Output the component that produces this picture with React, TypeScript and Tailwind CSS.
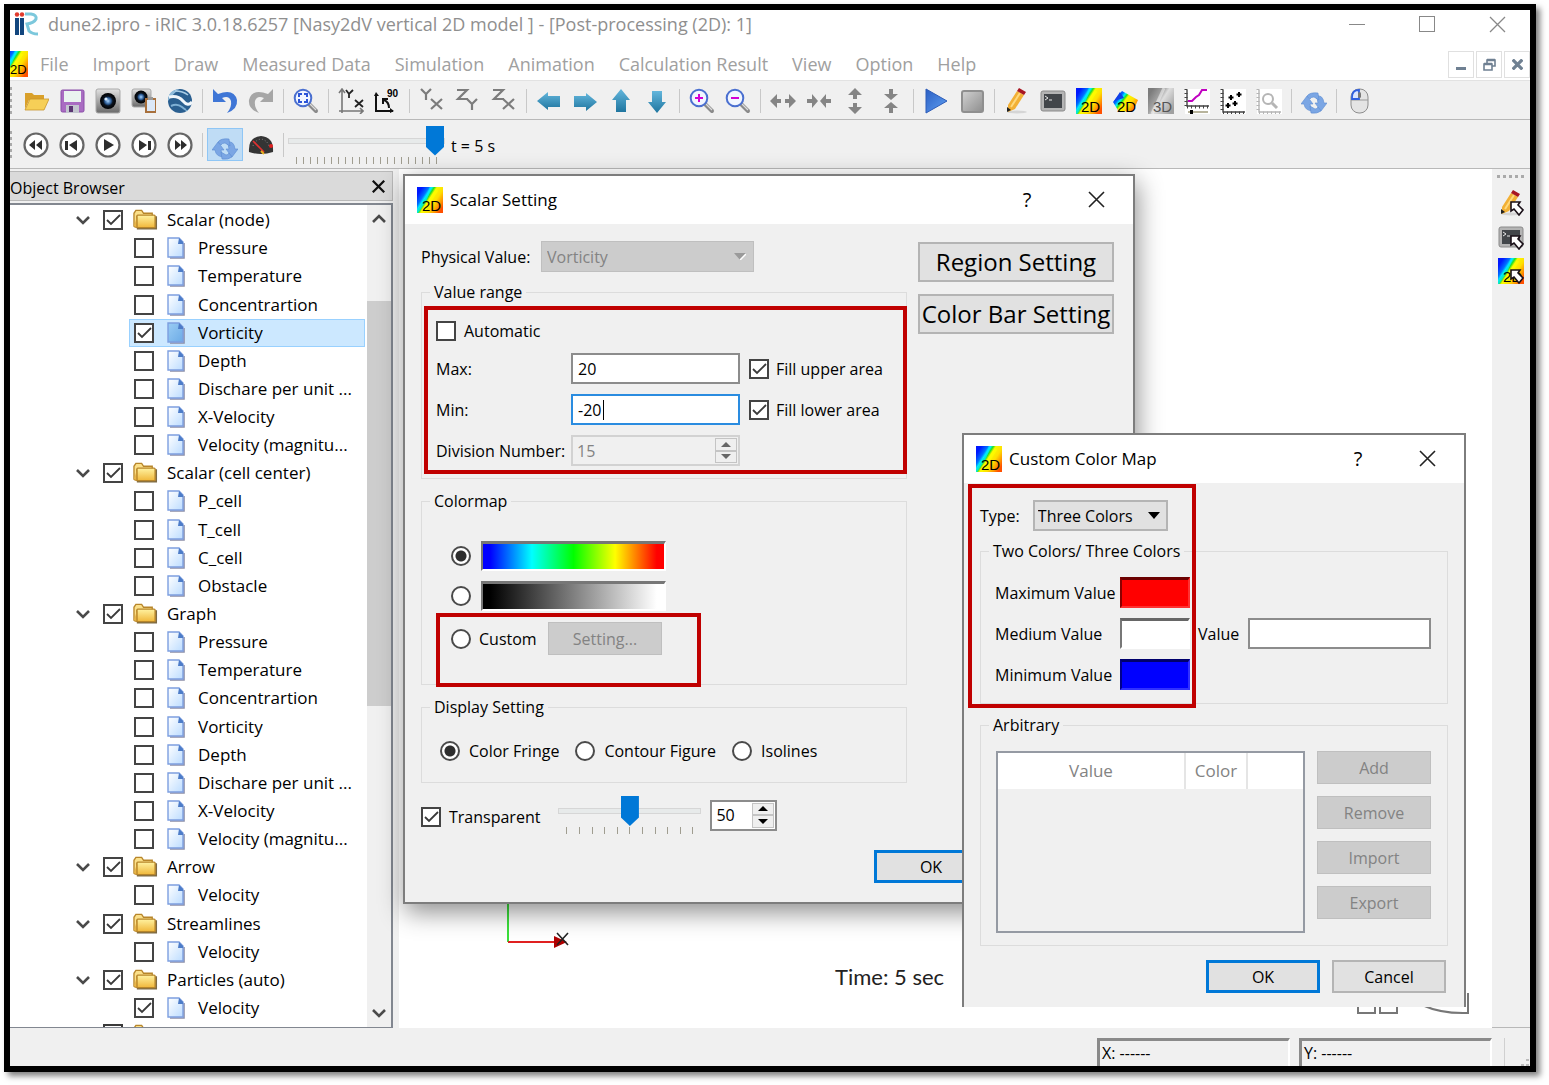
import { ReactNode } from 'react'
import clsx from 'clsx'

/* ---------- icons ---------- */

function Icon({ children, size = 26, className }: { children: ReactNode; size?: number; className?: string }) {
  return (
    <svg viewBox="0 0 26 26" width={size} height={size} className={clsx('shrink-0', className)} aria-hidden="true">
      {children}
    </svg>
  )
}

function Defs() {
  return (
    <svg width="0" height="0" className="absolute" aria-hidden="true">
      <defs>
        <linearGradient id="rainbow" x1="0" y1="0.1" x2="1" y2="0.75">
          <stop offset="0.1" stopColor="#0018ff" />
          <stop offset="0.28" stopColor="#0070ff" />
          <stop offset="0.36" stopColor="#00f0ff" />
          <stop offset="0.43" stopColor="#20e020" />
          <stop offset="0.5" stopColor="#f8f800" />
          <stop offset="0.7" stopColor="#ffe000" />
          <stop offset="0.88" stopColor="#ff9000" />
          <stop offset="1" stopColor="#ff5000" />
        </linearGradient>
        <linearGradient id="mono" x1="0" y1="0.1" x2="1" y2="0.75">
          <stop offset="0.1" stopColor="#7c7c7c" />
          <stop offset="0.4" stopColor="#a2a2a2" />
          <stop offset="0.55" stopColor="#dedede" />
          <stop offset="1" stopColor="#a0a0a0" />
        </linearGradient>
        <linearGradient id="teal" x1="0" y1="0" x2="0" y2="1">
          <stop offset="0" stopColor="#63b6dc" />
          <stop offset="1" stopColor="#1f759f" />
        </linearGradient>
        <linearGradient id="gold" x1="0" y1="0" x2="0" y2="1">
          <stop offset="0" stopColor="#fff2a0" />
          <stop offset="1" stopColor="#f0b73a" />
        </linearGradient>
        <linearGradient id="steel" x1="0" y1="0" x2="0" y2="1">
          <stop offset="0" stopColor="#e2e2e2" />
          <stop offset="1" stopColor="#6a6a6a" />
        </linearGradient>
        <linearGradient id="grey" x1="0" y1="0" x2="1" y2="1">
          <stop offset="0" stopColor="#d2d2d2" />
          <stop offset="1" stopColor="#8d8d8d" />
        </linearGradient>
        <linearGradient id="paper" x1="0" y1="0" x2="1" y2="1">
          <stop offset="0" stopColor="#ffffff" />
          <stop offset="1" stopColor="#bcdcff" />
        </linearGradient>
        <linearGradient id="paperOn" x1="0" y1="0" x2="1" y2="1">
          <stop offset="0" stopColor="#9accf4" />
          <stop offset="1" stopColor="#6cabe6" />
        </linearGradient>
        <linearGradient id="play" x1="0" y1="0" x2="1" y2="1">
          <stop offset="0" stopColor="#2b5fc4" />
          <stop offset="1" stopColor="#5fa0f2" />
        </linearGradient>
        <radialGradient id="lens">
          <stop offset="0" stopColor="#a8d4ff" />
          <stop offset="0.4" stopColor="#2a5a94" />
          <stop offset="0.6" stopColor="#0b1420" />
          <stop offset="1" stopColor="#000" />
        </radialGradient>
      </defs>
    </svg>
  )
}

const glyph = { fontFamily: 'Liberation Sans', fontSize: 15 }

const Rainbow = () => (
  <>
    <rect width="26" height="26" fill="url(#rainbow)" />
    <path d="M0 26 L9 12 L14 0" stroke="#00e8ff" strokeWidth="2" fill="none" opacity=".7" />
    <path d="M5 26 L20 3" stroke="#ffff00" strokeWidth="3" opacity=".6" />
  </>
)

const Icon2D = () => (
  <Icon>
    <Rainbow />
    <text x="5" y="24" {...glyph}>2D</text>
  </Icon>
)

/* narrow variant for the menu bar, flush with the window edge */
const MenuIcon2D = () => (
  <svg viewBox="8 0 18 26" width="18" height="26" className="shrink-0" aria-hidden="true">
    <Rainbow />
    <text x="8" y="23" fontFamily="Liberation Sans" fontSize="13">2D</text>
  </svg>
)

const Icon2DBird = () => (
  <Icon>
    <path d="M1 14 L10 3 L26 12 L21 23 L7 24 Z" fill="url(#rainbow)" />
    <path d="M8 4 L2 13 L12 10 Z" fill="#1040e8" />
    <text x="5" y="24" {...glyph}>2D</text>
  </Icon>
)

const Icon3D = () => (
  <Icon>
    <rect width="26" height="26" fill="url(#mono)" />
    <path d="M4 26 L16 0" stroke="#f0f0f0" strokeWidth="3" opacity=".6" />
    <text x="5" y="24" fill="#555" {...glyph}>3D</text>
  </Icon>
)

const FolderOpen = () => (
  <Icon>
    <path d="M2 5 h7 l2 2 h10 v5 H6 L2 21 Z" fill="#d9a02a" />
    <path d="M7 11 H26 L21 22 H2 Z" fill="#f6cf57" stroke="#c9962b" strokeWidth=".8" />
  </Icon>
)

const Save = () => (
  <Icon>
    <rect x="2" y="2" width="23" height="22" rx="1.5" fill="#a96cc2" stroke="#8a4fa8" />
    <rect x="5" y="3" width="17" height="11" fill="#eaf4f0" />
    <rect x="7" y="17" width="13" height="8" fill="#c3c6cf" />
    <rect x="10" y="18" width="4" height="6" fill="#5a3572" />
  </Icon>
)

const Camera = () => (
  <Icon>
    <rect x="1" y="1" width="24" height="24" rx="2" fill="url(#steel)" stroke="#aaa" />
    <circle cx="13" cy="13" r="8" fill="url(#lens)" />
    <circle cx="11" cy="11" r="1.6" fill="#d8ecff" />
  </Icon>
)

const CameraCopy = () => (
  <Icon>
    <rect x="1" y="1" width="19" height="18" rx="2" fill="url(#steel)" stroke="#aaa" />
    <circle cx="10" cy="9" r="6.5" fill="url(#lens)" />
    <rect x="14" y="10" width="11" height="15" fill="#a8703c" />
    <rect x="16" y="12" width="8" height="11" fill="#dbe8f8" />
    <rect x="17" y="9" width="5" height="3" fill="#999" />
  </Icon>
)

const Earth = () => (
  <Icon>
    <circle cx="13" cy="13" r="12" fill="#2a5f90" />
    <path d="M1 13 Q1 2 12 1 Q6 6 1 13" fill="#8fbcdc" />
    <path d="M2 9 Q11 7 16 13 T25 14" stroke="#f0f6fb" strokeWidth="3" fill="none" />
    <path d="M4 18 Q10 15 15 19 T20 22" stroke="#7fb0d4" strokeWidth="2" fill="none" />
    <path d="M8 3 Q16 3 21 7" stroke="#a9cde6" strokeWidth="1.600" fill="none" />
  </Icon>
)

const Undo = () => (
  <Icon>
    <path d="M1 1 L1 14 L14 14 L10 10 Q17 7 19 13 Q20 19 15 25 Q26 21 25 12 Q22 0 6 6 Z" fill="#3f76d6" />
  </Icon>
)

const Redo = () => (
  <Icon>
    <path d="M25 1 L25 14 L12 14 L16 10 Q9 7 7 13 Q6 19 11 25 Q0 21 1 12 Q4 0 20 6 Z" fill="#a6a6a6" />
  </Icon>
)

function Magnifier({ kind }: { kind: 'fit' | 'in' | 'out' }) {
  return (
    <Icon>
      <path d="M16 16 L23 23" stroke="#8a8a8a" strokeWidth="4" strokeLinecap="round" />
      <path d="M17 16 L23 22" stroke="#dcdcdc" strokeWidth="1.2" />
      <circle cx="10" cy="10" r="8.3" fill="#f1f6ff" stroke="#4a6fd0" strokeWidth="2" />
      {kind === 'fit' && (
        <path d="M6 9 V6 H9 M11 6 H14 V9 M14 11 V14 H11 M9 14 H6 V11" fill="none" stroke="#2c55d8" strokeWidth="2" />
      )}
      {kind !== 'fit' && <path d="M6 10 H14" stroke="#d400d4" strokeWidth="2" />}
      {kind === 'in' && <path d="M10 6 V14" stroke="#d400d4" strokeWidth="2" />}
    </Icon>
  )
}

const AxisXY = () => (
  <Icon>
    <path d="M4 25 V2 M1 5 L4 1 L7 5 M1 23 H25 M22 20 L25 23 L22 26" fill="none" stroke="#777" strokeWidth="1.6" />
    <path d="M8 2 L11 6 L15 2 M11 6 V10 M17 12 L25 19 M25 12 L17 19" fill="none" stroke="#222" strokeWidth="1.8" />
  </Icon>
)

const Rotate90 = () => (
  <Icon>
    <path d="M2 6 V23 H19" fill="none" stroke="#111" strokeWidth="2" />
    <path d="M0 8 L2 4 L5 8 M16 20 L20 23 L16 25" fill="#111" />
    <path d="M15 20 Q15 14 10 12 M9 16 V11 H14" fill="none" stroke="#111" strokeWidth="2" />
    <text x="13" y="9" fontFamily="Liberation Sans" fontSize="10" fontWeight="700">90</text>
  </Icon>
)

/* axis letters are drawn as plain strokes */
const strokesOf = {
  Y: 'M0 0 L5 5 L10 0 M5 5 V11',
  Z: 'M0 1 H10 L1 10 H11',
  X: 'M0 0 L11 10 M11 0 L0 10',
}

function Plane({ a, b }: { a: 'Y' | 'Z'; b: 'X' | 'Y' }) {
  return (
    <Icon>
      <g fill="none" stroke="#7c7c7c" strokeWidth="2.2">
        <path d={strokesOf[a]} transform="translate(2 1)" />
        <path d={strokesOf[b]} transform="translate(12 11)" />
      </g>
    </Icon>
  )
}

const arrows = {
  left: 'M1 13 L12 4 V8 H24 V19 H12 V22 Z',
  right: 'M25 14 L14 5 V8 H2 V19 H14 V23 Z',
  up: 'M13 1 L22 12 H18 V24 H8 V12 H4 Z',
  down: 'M13 25 L22 14 H18 V3 H8 V14 H4 Z',
}

const Arrow = ({ dir }: { dir: keyof typeof arrows }) => (
  <Icon>
    <path d={arrows[dir]} fill="url(#teal)" />
  </Icon>
)

function Stretch({ vertical, inward }: { vertical?: boolean; inward?: boolean }) {
  return (
    <Icon>
      <g fill="#858585" transform={vertical ? 'rotate(90 13 13)' : undefined}>
        {inward ? (
          <path d="M12 13 L6 6 V11 H1 V15 H6 V20 Z M14 13 L20 6 V11 H25 V15 H20 V20 Z" />
        ) : (
          <path d="M0 13 L7 6 V11 H11 V15 H7 V20 Z M26 13 L19 6 V11 H15 V15 H19 V20 Z" />
        )}
      </g>
    </Icon>
  )
}

const Run = () => (
  <Icon>
    <path d="M3 1 L24 13 L3 25 Z" fill="url(#play)" stroke="#2d5cb8" strokeLinejoin="round" />
  </Icon>
)

const Stop = () => (
  <Icon>
    <rect x="3" y="3" width="21" height="21" rx="2" fill="url(#grey)" stroke="#8f8f8f" strokeWidth="2" />
  </Icon>
)

const Cursor = () => (
  <path d="M13 12 L22 12 L20 15 L25 20 L21 25 L16 19 L13 21 Z" fill="#fff" stroke="#1a1018" strokeWidth="1.6" />
)

const Pencil = ({ picked }: { picked?: boolean }) => (
  <Icon>
    <ellipse cx="13" cy="24" rx="10" ry="1.5" fill="#d5d5d5" />
    <path d="M4 17 L13 3 L20 7 L11 21 L4 24 Z" fill="#f2b035" />
    <path d="M7 19 L16 5" stroke="#ffd97c" strokeWidth="2" />
    <path d="M13 3 L15 0 L22 4 L20 7 Z" fill="#a81622" />
    <path d="M3 19 L7 22 L3 24 Z" fill="#222" />
    {picked && <Cursor />}
  </Icon>
)

const Terminal = ({ picked }: { picked?: boolean }) => (
  <Icon>
    <rect x="1" y="3" width="24" height="20" rx="2" fill="#b4b4b4" stroke="#8a8a8a" />
    <rect x="4" y="6" width="18" height="14" fill="#42464a" />
    <path d="M5 8 L8 10 L5 12 M9 12 H12" stroke="#e8e8e8" fill="none" />
    {picked && <Cursor />}
  </Icon>
)

const Picked2D = () => (
  <Icon>
    <Rainbow />
    <text x="5" y="24" {...glyph}>2D</text>
    <Cursor />
  </Icon>
)

function Graph({ kind }: { kind: 'line' | 'dots' | 'zoom' }) {
  const axis = kind === 'zoom' ? '#b5b5b5' : '#444'
  const floor = kind === 'line' ? 18 : 24
  return (
    <Icon>
      <rect x="1" y="1" width="25" height="25" fill="#fff" />
      <path d={`M3 2 V${floor} H25`} stroke={axis} strokeWidth="1.4" fill="none" />
      <path d={`M2 1 V${floor}`} stroke={axis} strokeWidth="3" strokeDasharray="1 3" />
      <path d={`M3 ${floor + 1} H25`} stroke={axis} strokeWidth="3" strokeDasharray="1 3" />
      {kind === 'line' && (
        <>
          <path d="M4 13 H8 L12 9 L15 7 L18 2 H23" stroke="#c000c0" strokeWidth="2" fill="none" />
          <path d="M4 24 H24" stroke="#b8b49c" strokeWidth="2" />
          <rect x="6" y="22" width="3" height="4" />
        </>
      )}
      {kind === 'dots' && (
        <path
          d="M8 15 v5 M5.500 17.500 h5 M11 7 v5 M8.500 9.500 h5 M15 13 v5 M12.500 15.500 h5 M19 4 v5 M16.500 6.500 h5"
          stroke="#000"
          strokeWidth="2"
        />
      )}
      {kind === 'zoom' && (
        <>
          <circle cx="12" cy="11" r="5" fill="none" stroke="#b5b5b5" strokeWidth="2" />
          <path d="M16 15 L21 20" stroke="#b5b5b5" strokeWidth="3" />
        </>
      )}
    </Icon>
  )
}

const Refresh = () => (
  <Icon>
    <g fill="#7ba6e4" stroke="#5b8bd2" strokeWidth=".6">
      <path d="M0 16 L6 8 L12 16 H9 Q9 20 12 23 Q4 23 3 16 Z" />
      <path d="M26 15 L20 23 L14 15 H17 Q17 11 14 8 Q22 6 23 15 Z" />
      <path d="M6 8 Q9 4 17 5 L18 12 L13 9 Q10 9 9 11 Z" />
      <path d="M20 23 Q16 26 10 25 L9 18 L14 21 Q16 21 17 19 Z" />
    </g>
  </Icon>
)

const Mouse = () => (
  <Icon>
    <rect x="5" y="1" width="17" height="24" rx="8" fill="#e4e4e4" stroke="#8d8d8d" />
    <path d="M5 12 H22" stroke="#999" />
    <path d="M6 11 V9 Q6 2 13 2 V11 Z" fill="#dbe6ff" stroke="#2f5fe0" strokeWidth="1.8" />
    <rect x="12" y="4" width="3" height="6" rx="1.500" fill="#777" />
  </Icon>
)

function Transport({ d }: { d: string }) {
  return (
    <Icon>
      <circle cx="13" cy="13" r="11.500" fill="#fff" stroke="#666" strokeWidth="2.200" />
      <path d={d} fill="#2d2d2d" />
    </Icon>
  )
}

const Gauge = () => (
  <Icon>
    <path d="M1 20 Q0 5 13 4 Q26 5 25 20 Q13 24 1 20 Z" fill="#343434" />
    <path d="M5 14 Q7 8 13 7 Q19 8 21 14" stroke="#888" strokeDasharray="1 2" fill="none" />
    <path d="M5 9 L16 20" stroke="#e23030" strokeWidth="1.6" />
    <circle cx="23" cy="14" r="2" fill="#e02020" />
    <path d="M13 19 L16 22" stroke="#e8b020" strokeWidth="2" />
  </Icon>
)

const Logo = () => (
  <Icon>
    <rect x="1" y="7" width="4" height="17" fill="#12467e" />
    <rect x="6" y="7" width="4" height="17" fill="#12467e" />
    <circle cx="3" cy="3.500" r="2.200" fill="#e03a2c" />
    <circle cx="8" cy="3.500" r="2.200" fill="#e03a2c" />
    <path d="M11 3 H17 Q23 4 22 8 Q20 12 13 13 L15 20 Q18 23 24 23" fill="none" stroke="#7cc8dc" strokeWidth="3" />
  </Icon>
)

const Folder = () => (
  <svg viewBox="0 0 26 22" width="25" height="22" className="shrink-0" aria-hidden="true">
    <path d="M1 18 V4 L3 1 H9 L11 4 H20 V8" fill="#fbe08a" stroke="#b8862a" strokeWidth="1.4" />
    <path d="M24 7 V20 H4" fill="none" stroke="#7d6a44" strokeWidth="2" />
    <rect x="4" y="6" width="19" height="13" rx="1" fill="url(#gold)" stroke="#b8862a" strokeWidth="1.4" />
    <path d="M1 18 L4 19 V7" fill="#eab646" stroke="#b8862a" />
  </svg>
)

const Page = ({ on }: { on?: boolean }) => (
  <svg viewBox="0 0 18 22" width="18" height="22" className="shrink-0" aria-hidden="true">
    <path d="M3 21 H17 V6" stroke="#8c8fa8" strokeWidth="1.6" fill="none" />
    <path d="M1 1 H12 L16 5 V20 H1 Z" fill={on ? 'url(#paperOn)' : 'url(#paper)'} stroke="#7d9fe0" strokeWidth="1.4" />
    <path d="M12 1 L16 5 V7 H11 Z" fill="#4d7cc8" />
  </svg>
)

const Chevron = ({ up }: { up?: boolean }) => (
  <svg viewBox="0 0 16 10" width="16" height="10" className={clsx('shrink-0', up && 'rotate-180')} aria-hidden="true">
    <path d="M2 2 L8 8 L14 2" fill="none" stroke="#4a4a4a" strokeWidth="2.6" />
  </svg>
)

const Cross = ({ size = 17, width = 1.6, color = '#222' }: { size?: number; width?: number; color?: string }) => (
  <svg viewBox="0 0 17 17" width={size} height={size} aria-hidden="true">
    <path d="M1 1 L16 16 M16 1 L1 16" stroke={color} strokeWidth={width} />
  </svg>
)

/* ---------- controls ---------- */

function Check({ id, on }: { id: string; on?: boolean }) {
  return (
    <span className="relative h-5 w-5 shrink-0">
      <input
        id={id}
        type="checkbox"
        defaultChecked={on}
        className="peer block h-5 w-5 appearance-none border-2 border-[#444] bg-white"
      />
      <svg viewBox="0 0 20 20" className="pointer-events-none absolute inset-0 hidden peer-checked:block" aria-hidden="true">
        <path d="M4 10 L8 14 L17 5" fill="none" stroke="#3a3a3a" strokeWidth="1.800" />
      </svg>
    </span>
  )
}

function Radio({ id, name, on, label }: { id: string; name: string; on?: boolean; label?: string }) {
  return (
    <input
      id={id}
      name={name}
      type="radio"
      defaultChecked={on}
      aria-label={label}
      className="h-5 w-5 shrink-0 appearance-none rounded-full border-2 border-[#4a4a4a] bg-white checked:bg-[radial-gradient(circle,#2e2e2e_5px,#fff_6px)]"
    />
  )
}

function Group({ title, className, body, children }: { title: string; className?: string; body?: string; children: ReactNode }) {
  return (
    <fieldset className={clsx('relative min-w-0 border border-[#dcdcdc]', className)}>
      <legend className="ml-2 px-1 leading-6">{title}</legend>
      <div className={body}>{children}</div>
    </fieldset>
  )
}

function Btn({ children, primary, disabled }: { children: ReactNode; primary?: boolean; disabled?: boolean }) {
  return (
    <button
      disabled={disabled}
      className={clsx(
        'h-[33px] w-[114px] shrink-0',
        primary
          ? 'border-[3px] border-[#0078d7] bg-[#e1e1e1]'
          : disabled
            ? 'border border-[#bfbfbf] bg-[#ccc] text-[#838383]'
            : 'border-2 border-[#b4b4b4] bg-[#e1e1e1]'
      )}
    >
      {children}
    </button>
  )
}

function Slider({ label, value, ticks, className }: { label: string; value: number; ticks: number; className?: string }) {
  return (
    <div className={className}>
      <input
        type="range"
        aria-label={label}
        defaultValue={value}
        className="block h-[30px] w-full appearance-none bg-transparent [&::-webkit-slider-runnable-track]:h-[6px] [&::-webkit-slider-runnable-track]:border [&::-webkit-slider-runnable-track]:border-[#d6d6d6] [&::-webkit-slider-runnable-track]:bg-[#e7eaea] [&::-webkit-slider-thumb]:mt-[-13px] [&::-webkit-slider-thumb]:h-[30px] [&::-webkit-slider-thumb]:w-[18px] [&::-webkit-slider-thumb]:appearance-none [&::-webkit-slider-thumb]:bg-[#0078d7] [&::-webkit-slider-thumb]:[clip-path:polygon(0_0,100%_0,100%_72%,50%_100%,0_72%)]"
      />
      <div className="mt-px flex justify-between px-2">
        {Array.from({ length: ticks }, (_, i) => (
          <span key={i} className="h-[7px] w-px bg-[#a09d90]" />
        ))}
      </div>
    </div>
  )
}

function Spin({ id, label, value, disabled, className }: { id: string; label?: string; value: number; disabled?: boolean; className?: string }) {
  return (
    <div className={clsx('flex h-[31px] p-px', disabled ? 'border-2 border-[#d2d2d2]' : 'border-2 border-[#8c8c8c] bg-white', className)}>
      <input
        id={id}
        aria-label={label}
        defaultValue={value}
        disabled={disabled}
        className="min-w-0 flex-1 pl-[3px] outline-none disabled:text-[#838383]"
      />
      <div className="flex w-[22px] flex-col">
        {['up', 'down'].map(d => (
          <button key={d} disabled={disabled} aria-label={`Step ${d}`} className="flex flex-1 items-center justify-center border border-[#c4c4c4] bg-[#efefef]">
            <svg viewBox="0 0 10 5" width="10" height="5" aria-hidden="true">
              <path d={d === 'up' ? 'M0 5 L5 0 L10 5 Z' : 'M0 0 L5 5 L10 0 Z'} fill={disabled ? '#666' : '#000'} />
            </svg>
          </button>
        ))}
      </div>
    </div>
  )
}

const Marker = ({ className }: { className: string }) => (
  <div className={clsx('pointer-events-none absolute border-4 border-[#c00000]', className)} />
)

function DialogTitle({ children }: { children: ReactNode }) {
  return (
    <div className="flex h-12 items-center bg-white pb-px pl-3">
      <Icon2D />
      <h2 className="ml-[7px] text-[17px]">{children}</h2>
      <button aria-label="What's this" className="ml-auto w-6 text-xl">?</button>
      <button aria-label="Close" className="ml-[49px] mr-7"><Cross /></button>
    </div>
  )
}

/* ---------- data ---------- */

const menus = ['File', 'Import', 'Draw', 'Measured Data', 'Simulation', 'Animation', 'Calculation Result', 'View', 'Option', 'Help']

type Tool = [string, ReactNode]

const tools: Tool[][] = [
  [['Open', <FolderOpen />], ['Save', <Save />], ['Snapshot', <Camera />], ['Copy snapshot', <CameraCopy />], ['Google Earth', <Earth />]],
  [['Undo', <Undo />], ['Redo', <Redo />]],
  [['Fit', <Magnifier kind="fit" />]],
  [['Reset rotation', <AxisXY />], ['Rotate 90', <Rotate90 />]],
  [['XY plane', <Plane a="Y" b="X" />], ['YZ plane', <Plane a="Z" b="Y" />], ['XZ plane', <Plane a="Z" b="X" />]],
  [['Move left', <Arrow dir="left" />], ['Move right', <Arrow dir="right" />], ['Move up', <Arrow dir="up" />], ['Move down', <Arrow dir="down" />]],
  [['Zoom in', <Magnifier kind="in" />], ['Zoom out', <Magnifier kind="out" />]],
  [['Stretch X', <Stretch />], ['Shrink X', <Stretch inward />], ['Stretch Y', <Stretch vertical />], ['Shrink Y', <Stretch vertical inward />]],
  [['Run', <Run />], ['Stop', <Stop />]],
  [
    ['Pre-processing', <Pencil />], ['Solver console', <Terminal />], ['2D window', <Icon2D />], ['Bird-eye window', <Icon2DBird />],
    ['3D window', <Icon3D />], ['Chart', <Graph kind="line" />], ['Scattered chart', <Graph kind="dots" />], ['Verification', <Graph kind="zoom" />],
  ],
  [['Reload', <Refresh />]],
  [['Mouse hint', <Mouse />]],
]

const transport: Tool[] = [
  ['First', <Transport d="M12 8 V18 L6 13 Z M19 8 V18 L13 13 Z" />],
  ['Previous', <Transport d="M6 9 H9 V18 H6 Z M18 8 V19 L10 13 Z" />],
  ['Play', <Transport d="M9 7 L19 13 L9 19 Z" />],
  ['Next', <Transport d="M8 8 L16 13 L8 19 Z M17 9 H20 V18 H17 Z" />],
  ['Last', <Transport d="M8 8 L14 13 L8 18 Z M14 8 L20 13 L14 18 Z" />],
]

const values = ['Pressure', 'Temperature', 'Concentrartion', 'Vorticity', 'Depth', 'Dischare per unit ...', 'X-Velocity', 'Velocity (magnitu...']

const tree = [
  { name: 'Scalar (node)', items: values, checked: 'Vorticity', selected: 'Vorticity' },
  { name: 'Scalar (cell center)', items: ['P_cell', 'T_cell', 'C_cell', 'Obstacle'] },
  { name: 'Graph', items: values },
  { name: 'Arrow', items: ['Velocity'] },
  { name: 'Streamlines', items: ['Velocity'] },
  { name: 'Particles (auto)', items: ['Velocity'], checked: 'Velocity' },
]

/* ---------- panels ---------- */

const Separator = () => <span className="mx-1 h-6 w-px bg-[#c8c8c8]" />

const Grip = () => <span className="mr-[6px] h-7 w-[2px] bg-[repeating-linear-gradient(#aaa_0_3px,transparent_3px_6px)]" />

function TitleBar() {
  return (
    <header className="flex h-7 items-center bg-white pl-1 text-[18px] text-[#8f8f8f]">
      <Logo />
      <h1 className="ml-2 whitespace-nowrap">dune2.ipro - iRIC 3.0.18.6257 [Nasy2dV vertical 2D model ] - [Post-processing (2D): 1]</h1>
      <div className="ml-auto flex items-center gap-[54px] pr-6">
        <button aria-label="Minimize"><span className="block h-px w-4 bg-[#888]" /></button>
        <button aria-label="Maximize"><span className="block h-4 w-4 border border-[#888]" /></button>
        <button aria-label="Close"><Cross color="#888" width={1.3} /></button>
      </div>
    </header>
  )
}

function MenuBar() {
  const box = 'flex h-[27px] w-[26px] items-center justify-center border border-[#e0e0e0]'
  return (
    <nav className="mt-[10px] flex h-8 items-center bg-white">
      <MenuIcon2D />
      <div className="ml-3 flex gap-6 text-[18px] text-[#a0a0a0]">
        {menus.map(m => (
          <button key={m} className="whitespace-nowrap">{m}</button>
        ))}
      </div>
      <div className="ml-auto flex gap-[2px]">
        <button aria-label="Minimize window" className={box}>
          <span className="mt-2 h-[3px] w-[10px] bg-[#6f8092]" />
        </button>
        <button aria-label="Restore window" className={box}>
          <svg viewBox="0 0 13 13" width="13" height="13" aria-hidden="true">
            <path d="M1 6 H9 V12 H1 Z M4 5 V2 H12 V8 H9" fill="none" stroke="#6f8092" strokeWidth="1.6" />
            <path d="M1 6 H9 M4 2 H12" stroke="#6f8092" strokeWidth="2.500" />
          </svg>
        </button>
        <button aria-label="Close window" className={box}><Cross size={11} width={5} color="#6f8092" /></button>
      </div>
    </nav>
  )
}

function ToolBars() {
  return (
    <>
      <div className="flex h-10 shrink-0 items-center border-b border-t border-b-[#b8b8b8] border-t-[#e2e2e2] pt-[2px]">
        <Grip />
        {tools.map((group, i) => (
          <div key={i} className="flex items-center">
            {i > 0 && <Separator />}
            {group.map(([name, icon]) => (
              <button key={name} title={name} aria-label={name} className="flex w-9 justify-center">{icon}</button>
            ))}
          </div>
        ))}
      </div>
      <div className="flex h-[49px] shrink-0 items-center border-b border-[#b8b8b8] pt-px">
        <Grip />
        {transport.map(([name, icon]) => (
          <button key={name} title={name} aria-label={name} className="flex w-9 justify-center">{icon}</button>
        ))}
        <Separator />
        <button aria-label="Follow time step" className="flex h-[33px] w-9 items-end justify-center border border-[#8fc6f5] bg-[#bfdcf5]"><Refresh /></button>
        <button aria-label="Speed" className="flex w-9 justify-center"><Gauge /></button>
        <Separator />
        <Slider label="Time step" value={100} ticks={21} className="w-[157px]" />
        <span className="ml-[6px] pt-[2px] text-base">t = 5 s</span>
      </div>
    </>
  )
}

function ObjectBrowser() {
  return (
    <aside className="mr-[6px] flex w-[383px] shrink-0 flex-col pt-[2px]">
      <div className="flex h-[30px] shrink-0 items-center justify-between border border-l-0 border-[#b9b9b9] bg-[#dadada] pr-[7px]">
        <h2 className="pt-[3px] text-base">Object Browser</h2>
        <button aria-label="Close panel"><Cross size={13} width={3} color="#111" /></button>
      </div>
      <div className="mt-[2px] flex min-h-0 flex-1 border-b border-r-2 border-t-2 border-[#828790] bg-white">
        <ul className="flex min-w-0 flex-1 flex-col overflow-hidden pt-px text-[17px] leading-7">
          {tree.map(folder => [
            <li key={folder.name} className="flex min-h-0 flex-1 items-center border border-transparent pl-16">
              <button aria-label={`Collapse ${folder.name}`}><Chevron /></button>
              <label className="ml-3 flex items-center">
                <Check id={`f-${folder.name}`} on />
                <span className="ml-[10px] mr-[9px]"><Folder /></span>
                {folder.name}
              </label>
            </li>,
            ...folder.items.map(item => {
              const selected = folder.selected === item
              return (
                <li
                  key={`${folder.name}/${item}`}
                  className={clsx('ml-[119px] mr-[2px] flex min-h-0 flex-1 items-center border pl-1', selected ? 'border-[#99d1ff] bg-[#cce8ff]' : 'border-transparent')}
                >
                  <label className="flex items-center whitespace-nowrap">
                    <Check id={`i-${folder.name}-${item}`} on={folder.checked === item} />
                    <span className="mx-[13px]"><Page on={selected} /></span>
                    {item}
                  </label>
                </li>
              )
            }),
          ])}
          <li className="flex h-[5px] shrink-0 gap-[10px] overflow-hidden pl-[93px] pt-[2px]">
            <input type="checkbox" aria-label="Next folder" className="h-5 w-5 appearance-none border-2 border-[#3a3a3a]" />
            <Folder />
          </li>
        </ul>
        <div className="flex w-6 shrink-0 flex-col items-center bg-[#f0f0f0]">
          <button aria-label="Scroll up" className="h-7"><Chevron up /></button>
          <div className="flex-[68]" />
          <div className="w-full flex-[405] bg-[#cdcdcd]" />
          <div className="flex-[293]" />
          <button aria-label="Scroll down" className="h-7"><Chevron /></button>
        </div>
      </div>
    </aside>
  )
}

function ScalarDialog() {
  const field = 'h-[31px] w-[169px] border-2 bg-white pl-[5px] outline-none'
  const bar = 'h-[30px] w-[185px] border-2 border-t-[3px] border-b-white border-l-[#777] border-r-white border-t-[#777]'
  return (
    <section className="absolute left-[4px] top-[5px] h-[730px] w-[732px] border-2 border-[#7d7d7d] bg-[#f0f0f0] text-base shadow-[2px_8px_24px_rgba(0,0,0,0.45)]">
      <DialogTitle>Scalar Setting</DialogTitle>
      <div className="flex justify-between pl-4 pr-[19px] pt-[17px]">
        <div className="w-[486px]">
          <div className="flex items-center justify-between pr-[153px]">
            <label htmlFor="physical">Physical Value:</label>
            <span className="relative">
              <select id="physical" disabled className="h-[31px] w-[213px] appearance-none border border-[#bfbfbf] bg-[#ccc] pl-[5px] text-[#838383] opacity-100">
                <option>Vorticity</option>
              </select>
              <svg viewBox="0 0 12 7" width="12" height="7" className="pointer-events-none absolute right-2 top-3" aria-hidden="true">
                <path d="M0 0 H12 L6 7 Z" fill="#9a9a9a" />
                <path d="M12 1 L6 7" stroke="#fff" strokeWidth="1.500" />
              </svg>
            </span>
          </div>

          <Group title="Value range" className="mt-2" body="px-[14px] pb-3 pt-[17px]">
            <label className="flex h-5 items-center gap-2"><Check id="auto" />Automatic</label>
            <div className="mt-3 grid grid-cols-[135px_169px_1fr] items-center gap-y-[10px]">
              <label htmlFor="max">Max:</label>
              <input id="max" defaultValue="20" className={clsx(field, 'border-[#8c8c8c]')} />
              <label className="ml-[9px] flex items-center gap-[7px]"><Check id="upper" on />Fill upper area</label>
              <label htmlFor="min">Min:</label>
              <span className="relative">
                <input id="min" defaultValue="-20" className={clsx(field, 'border-[#2a8ce0]')} />
                <span className="absolute left-8 top-[6px] h-5 w-px bg-black" />
              </span>
              <label className="ml-[9px] flex items-center gap-[7px]"><Check id="lower" on />Fill lower area</label>
              <label htmlFor="division" className="whitespace-nowrap">Division Number:</label>
              <Spin id="division" value={15} disabled className="w-[169px]" />
            </div>
            <Marker className="bottom-1 left-[2px] right-[-1px] top-[2px]" />
          </Group>

          <Group title="Colormap" className="mt-[10px]" body="pb-[29px] pl-[29px] pt-7">
            <div className="flex items-center gap-[10px]">
              <Radio id="cm-rainbow" name="cm" on label="Rainbow" />
              <div className={clsx(bar, 'bg-[linear-gradient(90deg,#00f_4%,#0ff_27%,#0f0_50%,#ff0_73%,#f00_96%)]')} />
            </div>
            <div className="mt-[10px] flex items-center gap-[10px]">
              <Radio id="cm-grey" name="cm" label="Grayscale" />
              <div className={clsx(bar, 'bg-[linear-gradient(90deg,#000_4%,#fff_96%)]')} />
            </div>
            <div className="mt-[11px] flex items-center">
              <label className="flex w-[97px] items-center gap-2"><Radio id="cm-custom" name="cm" />Custom</label>
              <Btn disabled>Setting...</Btn>
            </div>
            <Marker className="-bottom-[3px] left-[14px] h-[74px] w-[265px]" />
          </Group>

          <Group title="Display Setting" className="mt-[10px]" body="flex gap-4 pb-[21px] pl-[18px] pt-[22px]">
            {['Color Fringe', 'Contour Figure', 'Isolines'].map((d, i) => (
              <label key={d} className="flex h-5 items-center gap-[9px]"><Radio id={`ds-${i}`} name="ds" on={i === 0} />{d}</label>
            ))}
          </Group>

          <div className="mt-[13px] flex items-center">
            <label className="flex items-center gap-2 pt-1"><Check id="transparent" on />Transparent</label>
            <Slider label="Transparency" value={50} ticks={11} className="ml-[18px] w-[143px]" />
            <Spin id="opacity" label="Transparency value" value={50} className="ml-[9px] w-[67px]" />
          </div>
        </div>
        <div className="flex w-[196px] flex-col gap-3 pt-px text-2xl leading-8">
          <button className="h-10 whitespace-nowrap border-2 border-[#b4b4b4] bg-[#e1e1e1]">Region Setting</button>
          <button className="h-10 whitespace-nowrap border-2 border-[#b4b4b4] bg-[#e1e1e1]">Color Bar Setting</button>
        </div>
      </div>
      <div className="mt-4 flex justify-end gap-3 pr-[19px]">
        <Btn primary>OK</Btn>
        <Btn>Cancel</Btn>
      </div>
    </section>
  )
}

function ColorMapDialog() {
  const swatches = [
    { label: 'Maximum Value', cls: 'border-l-[#8b0000] border-t-[#6b0000] border-b-[#ff3030] border-r-[#ff3030] bg-[#f00]' },
    { label: 'Medium Value', cls: 'border-l-[#777] border-t-[#666] border-b-white border-r-white bg-white' },
    { label: 'Minimum Value', cls: 'border-l-[#00008b] border-t-[#00006b] border-b-[#3030ff] border-r-[#3030ff] bg-[#00f]' },
  ]
  return (
    <section className="absolute left-[563px] top-[264px] h-[574px] w-[504px] border-2 border-b-0 border-[#7d7d7d] bg-[#f0f0f0] text-base">
      <DialogTitle>Custom Color Map</DialogTitle>
      <div className="pl-4 pr-4 pt-[17px]">
        <div className="flex items-center gap-[13px]">
          <label htmlFor="type">Type:</label>
          <span className="relative">
            <select id="type" className="h-[31px] w-[135px] appearance-none border-2 border-[#b4b4b4] bg-[#e1e1e1] pl-[3px]">
              <option>Three Colors</option>
            </select>
            <svg viewBox="0 0 12 7" width="12" height="7" className="pointer-events-none absolute right-2 top-3" aria-hidden="true">
              <path d="M0 0 H12 L6 7 Z" />
            </svg>
          </span>
        </div>

        <Group title="Two Colors/ Three Colors" className="mt-2" body="flex flex-col gap-[10px] pb-[13px] pl-[14px] pr-4 pt-[14px]">
          {swatches.map(s => (
            <div key={s.label} className="flex items-center">
              <span className="w-[125px]">{s.label}</span>
              <button aria-label={s.label} className={clsx('h-[31px] w-[70px] border-2 border-t-[3px]', s.cls)} />
              {s.label === 'Medium Value' && (
                <>
                  <label htmlFor="medium" className="ml-2">Value</label>
                  <input id="medium" className="ml-auto h-[31px] w-[183px] border-2 border-[#8c8c8c] bg-white" />
                </>
              )}
            </div>
          ))}
        </Group>

        <Group title="Arbitrary" className="mt-[9px]" body="flex gap-3 pb-3 pl-[15px] pr-4 pt-[14px]">
          <div className="h-[182px] flex-1 border-2 border-[#959aa3]">
            <table className="w-full table-fixed bg-white text-[17px] text-[#838383]">
              <thead>
                <tr className="h-9">
                  <th className="w-[187px] border-r-2 border-[#e5e5e5] font-normal">Value</th>
                  <th className="w-[62px] border-r-2 border-[#e5e5e5] font-normal">Color</th>
                  <th />
                </tr>
              </thead>
            </table>
          </div>
          <div className="flex flex-col gap-3">
            {['Add', 'Remove', 'Import', 'Export'].map(b => (
              <Btn key={b} disabled>{b}</Btn>
            ))}
          </div>
        </Group>

        <div className="mt-[14px] flex justify-end gap-3 pr-[2px]">
          <Btn primary>OK</Btn>
          <Btn>Cancel</Btn>
        </div>
      </div>
      <Marker className="left-1 top-[49px] h-[224px] w-[228px]" />
    </section>
  )
}

function Canvas() {
  return (
    <main className="relative min-w-0 flex-1 bg-white">
      <svg viewBox="0 0 70 50" width="70" height="50" className="absolute left-[104px] top-[733px]" aria-hidden="true">
        <path d="M5 0 V40" stroke="#3be03b" strokeWidth="2" />
        <path d="M5 40 H52" stroke="#e02020" strokeWidth="2" />
        <path d="M51 34 L64 40 L51 46 Z" fill="#b00000" />
        <path d="M54 31 L65 43 M65 31 L54 43" stroke="#222" strokeWidth="1.600" />
      </svg>
      <p className="absolute left-[436px] top-[791px] font-[Lato] text-[22px] text-[#222]">Time: 5 sec</p>
      <svg viewBox="0 0 120 30" width="120" height="30" className="absolute left-[955px] top-[820px]" aria-hidden="true">
        <path d="M4 10 V24 H21 V10 M26 10 V24 H43 V10" fill="none" stroke="#777" strokeWidth="2" />
        <path d="M68 16 Q88 25 114 24 V4" fill="none" stroke="#777" strokeWidth="2" />
      </svg>
      <ScalarDialog />
      <ColorMapDialog />
    </main>
  )
}

function StatusBar() {
  const cell = 'h-full w-[193px] border-l-[3px] border-r-2 border-t-[3px] border-l-[#8a8a8a] border-r-white border-t-[#8a8a8a] pl-[2px] leading-6'
  return (
    <footer className="flex h-[38px] shrink-0 justify-end gap-[9px] pt-[10px] text-base">
      <div className={cell}>X: ------</div>
      <div className={cell}>Y: ------</div>
      <div className="ml-[3px] flex w-[26px] items-end justify-end border-l border-[#d0d0d0]">
        <svg viewBox="0 0 10 8" width="10" height="8" aria-hidden="true">
          <path d="M6 1 h3 v2 h-3 Z M1 6 h3 v2 h-3 Z M6 6 h3 v2 h-3 Z" fill="#bbb" />
        </svg>
      </div>
    </footer>
  )
}

export default function App() {
  return (
    <div className="h-screen overflow-hidden bg-white pb-[13px] pl-1 pr-[13px] pt-1 font-['Open_Sans',sans-serif] text-black">
      <Defs />
      <div className="flex h-full flex-col overflow-hidden border-[6px] border-black bg-[#f0f0f0] shadow-[4px_4px_6px_rgba(0,0,0,0.5)]">
        <div className="shrink-0 bg-white">
          <TitleBar />
          <MenuBar />
        </div>
        <ToolBars />
        <div className="flex min-h-0 flex-1">
          <ObjectBrowser />
          <Canvas />
          <div className="flex w-[38px] shrink-0 flex-col items-center gap-2 border-b border-[#b8b8b8] pt-[6px]">
            <span className="h-[3px] w-7 bg-[repeating-linear-gradient(90deg,#aaa_0_3px,transparent_3px_6px)]" />
            <button aria-label="Focus pre-processing" className="mt-1"><Pencil picked /></button>
            <button aria-label="Focus console"><Terminal picked /></button>
            <button aria-label="Focus 2D window"><Picked2D /></button>
          </div>
        </div>
        <StatusBar />
      </div>
    </div>
  )
}
